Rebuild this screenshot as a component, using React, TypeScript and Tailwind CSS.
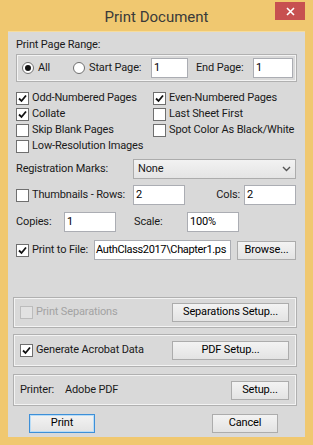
import React from "react";

const font = { fontFamily: 'Roboto, "Liberation Sans", Arial, sans-serif' };

function Check({ checked = false, disabled = false }: { checked?: boolean; disabled?: boolean }) {
  return (
    <span
      className={
        "w-[13px] h-[13px] shrink-0 border flex items-center justify-center " +
        (disabled ? "border-[#bcbcbc] bg-[#e2e2e2]" : "border-[#6f6f6f] bg-white")
      }
    >
      {checked && (
        <svg width="9" height="9" viewBox="0 0 9 9">
          <path d="M1 4.5 L3.5 7 L8 1.5" fill="none" stroke="#111" strokeWidth="1.8" />
        </svg>
      )}
    </span>
  );
}

function Radio({ checked = false }: { checked?: boolean }) {
  return (
    <span className="w-[12px] h-[12px] shrink-0 rounded-full border border-[#6f6f6f] bg-white flex items-center justify-center">
      {checked && <span className="w-[6px] h-[6px] rounded-full bg-[#111]" />}
    </span>
  );
}

function Field({ value, w, tight = false }: { value: string; w: string; tight?: boolean }) {
  return (
    <div
      className={
        w +
        " h-[20px] shrink-0 bg-white border border-[#abadb3] flex items-center text-black overflow-hidden whitespace-nowrap " +
        (tight ? "px-[1px] tracking-[-0.35px]" : "px-[2px]")
      }
    >
      {value}
    </div>
  );
}

function Btn({ label, w, primary = false }: { label: string; w: string; primary?: boolean }) {
  return (
    <div
      className={
        w +
        " h-[19px] shrink-0 flex items-center justify-center text-black whitespace-nowrap bg-gradient-to-b from-[#f3f3f3] to-[#e3e3e3] border " +
        (primary ? "border-[#3d8fd8] shadow-[inset_0_0_0_1px_#b8dcf6]" : "border-[#acacac]")
      }
    >
      {label}
    </div>
  );
}

function CheckRow({ label, checked }: { label: string; checked?: boolean }) {
  return (
    <div className="h-[16px] flex items-center gap-[3px] whitespace-nowrap">
      <Check checked={checked} />
      <span>{label}</span>
    </div>
  );
}

const group = "border border-[#b0b0b0] shadow-[inset_0_0_0_1px_#f3f3f3]";

export default function App() {
  return (
    <div style={font} className="w-[313px] h-[445px] bg-[#f0c870] flex flex-col text-[11px] tracking-[-0.15px] text-[#1a1a1a]">
      <div className="h-[31px] relative flex items-center justify-center">
        <span className="text-[15px] tracking-normal text-[#3a3a3a] mt-[3px]">Print Document</span>
        <div className="absolute right-[8px] top-[2px] w-[30px] h-[18px] bg-[#c75050] flex items-center justify-center">
          <svg width="9" height="9" viewBox="0 0 9 9">
            <path d="M1 1 L8 8 M8 1 L1 8" stroke="#fff" strokeWidth="1.6" />
          </svg>
        </div>
      </div>

      <div className="mx-[8px] mb-[8px] flex-1 bg-[#d9d9d9] border-t border-[#f6dc9c] flex flex-col px-[8px] pt-[5px] whitespace-nowrap">
        <div className="h-[16px] leading-[16px]">Print Page Range:</div>

        <div className={group + " mt-[1px] h-[28px] flex items-center"}>
          <span className="ml-[5px]"><Radio checked /></span>
          <span className="ml-[4px] w-[35px]">All</span>
          <Radio />
          <span className="ml-[4px] w-[62px]">Start Page:</span>
          <Field value="1" w="w-[37px]" />
          <span className="ml-[8px] w-[57px]">End Page:</span>
          <Field value="1" w="w-[40px]" />
        </div>

        <div className="mt-[8px] flex">
          <div className="w-[137px] flex flex-col">
            <CheckRow label="Odd-Numbered Pages" checked />
            <CheckRow label="Collate" checked />
            <CheckRow label="Skip Blank Pages" />
            <CheckRow label="Low-Resolution Images" />
          </div>
          <div className="flex-1 flex flex-col">
            <CheckRow label="Even-Numbered Pages" checked />
            <CheckRow label="Last Sheet First" />
            <CheckRow label="Spot Color As Black/White" />
          </div>
        </div>

        <div className="mt-[5px] h-[20px] flex items-center">
          <span className="w-[117px]">Registration Marks:</span>
          <div className="w-[163px] h-[20px] border border-[#acacac] bg-gradient-to-b from-[#f2f2f2] to-[#e4e4e4] flex items-center justify-between px-[4px]">
            <span>None</span>
            <svg width="9" height="6" viewBox="0 0 9 6">
              <path d="M1 1 L4.5 4.5 L8 1" fill="none" stroke="#555" strokeWidth="1.4" />
            </svg>
          </div>
        </div>

        <div className="mt-[6px] h-[20px] flex items-center">
          <div className="w-[117px] flex items-center gap-[3px]">
            <Check />
            <span>Thumbnails - Rows:</span>
          </div>
          <Field value="2" w="w-[52px]" />
          <span className="w-[59px] text-right pr-[4px]">Cols:</span>
          <Field value="2" w="w-[52px]" />
        </div>

        <div className="mt-[7px] h-[20px] flex items-center">
          <span className="w-[48px]">Copies:</span>
          <Field value="1" w="w-[52px]" />
          <span className="ml-[18px] w-[53px]">Scale:</span>
          <Field value="100%" w="w-[52px]" />
        </div>

        <div className="mt-[8px] h-[20px] flex items-center">
          <div className="w-[78px] flex items-center gap-[3px]">
            <Check checked />
            <span>Print to File:</span>
          </div>
          <Field value="AuthClass2017\Chapter1.ps" w="w-[137px]" tight />
          <span className="ml-[6px]"><Btn label="Browse..." w="w-[59px]" /></span>
        </div>

        <div className={group + " mt-[37px] -ml-[3px] w-[284px] h-[31px] flex items-center pl-[6px]"}>
          <div className="w-[152px] flex items-center gap-[3px]">
            <Check disabled />
            <span className="text-[#a3a3a3]">Print Separations</span>
          </div>
          <Btn label="Separations Setup..." w="w-[117px]" />
        </div>

        <div className={group + " mt-[6px] -ml-[3px] w-[284px] h-[33px] flex items-center pl-[6px]"}>
          <div className="w-[152px] flex items-center gap-[3px]">
            <Check checked />
            <span>Generate Acrobat Data</span>
          </div>
          <Btn label="PDF Setup..." w="w-[117px]" />
        </div>

        <div className={group + " mt-[7px] -ml-[3px] w-[284px] h-[32px] flex items-center pl-[6px]"}>
          <span className="w-[45px]">Printer:</span>
          <span className="w-[166px]">Adobe PDF</span>
          <Btn label="Setup..." w="w-[58px]" />
        </div>

        <div className="mt-[8px] flex">
          <span className="ml-[13px]"><Btn label="Print" w="w-[66px]" primary /></span>
          <span className="ml-[117px]"><Btn label="Cancel" w="w-[66px]" /></span>
        </div>
      </div>
    </div>
  );
}
